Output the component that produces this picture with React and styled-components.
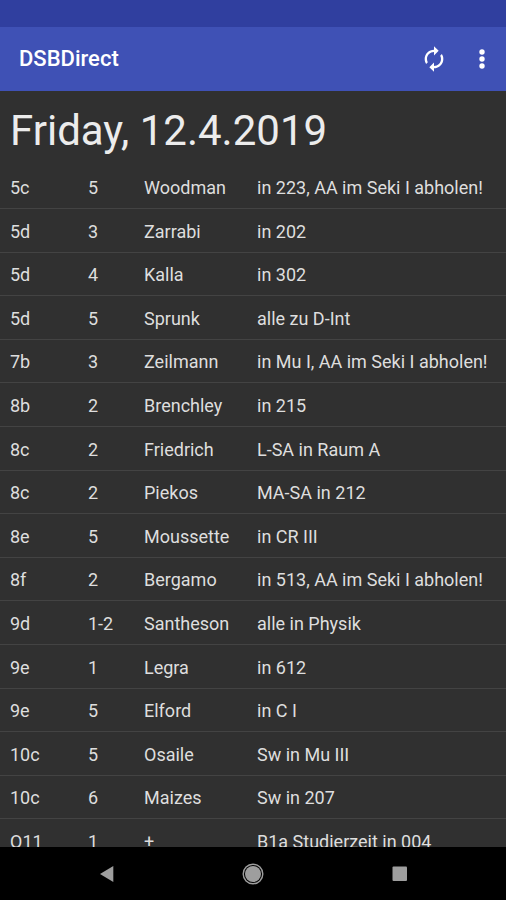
import styled, { createGlobalStyle } from 'styled-components';

const GlobalStyle = createGlobalStyle`
  * {
    box-sizing: border-box;
  }

  body {
    margin: 0;
    background: #303030;
    color: #dedede;
    font-family: Roboto, 'Liberation Sans', sans-serif;
  }
`;

const Screen = styled.div`
  display: flex;
  flex-direction: column;
  height: 100vh;
`;

const StatusBar = styled.div`
  flex: none;
  height: 27px;
  background: #303f9f;
`;

const AppBar = styled.header`
  display: flex;
  flex: none;
  align-items: center;
  height: 64px;
  padding: 0 8px 0 19px;
  background: #3f51b5;
`;

const AppTitle = styled.span`
  flex: 1;
  color: #fff;
  font-size: 22px;
  font-weight: 500;
  line-height: 30px;
`;

const Actions = styled.div`
  display: flex;
  gap: 12px;
`;

const IconButton = styled.button`
  display: flex;
  align-items: center;
  justify-content: center;
  width: ${({ $width }) => $width}px;
  height: 40px;
  padding: 0;
  border: none;
  background: none;
  color: ${({ $color }) => $color || '#fff'};
  cursor: pointer;
`;

const Content = styled.main`
  flex: 1;
  min-height: 0;
  overflow-y: auto;
  scrollbar-width: none;
`;

const DateHeading = styled.h1`
  margin: 0;
  padding: 12px 10px 6px;
  color: #ececec;
  font-size: 42px;
  font-weight: 400;
  line-height: 56px;
`;

const PlanTable = styled.table`
  width: 100%;
  border-collapse: separate;
  border-spacing: 0;
  table-layout: fixed;
`;

const Column = styled.col`
  width: ${({ $width }) => ($width ? `${$width}px` : 'auto')};
`;

const Row = styled.tr`
  height: 44px;

  &:nth-child(5n),
  &:nth-child(5n + 3) {
    height: 43px;
  }
`;

const Cell = styled.td`
  padding: 2px 0 0 10px;
  border-bottom: 1px solid #434343;
  font-size: 18px;
  line-height: 24px;
  white-space: nowrap;
`;

const NavBar = styled.nav`
  display: flex;
  flex: none;
  align-items: center;
  justify-content: space-between;
  height: 53px;
  padding: 0 86px;
  background: #000;
`;

const COLUMNS = [78, 56, 113, null];

const ENTRIES = [
  ['5c', '5', 'Woodman', 'in 223, AA im Seki I abholen!'],
  ['5d', '3', 'Zarrabi', 'in 202'],
  ['5d', '4', 'Kalla', 'in 302'],
  ['5d', '5', 'Sprunk', 'alle zu D-Int'],
  ['7b', '3', 'Zeilmann', 'in Mu I, AA im Seki I abholen!'],
  ['8b', '2', 'Brenchley', 'in 215'],
  ['8c', '2', 'Friedrich', 'L-SA in Raum A'],
  ['8c', '2', 'Piekos', 'MA-SA in 212'],
  ['8e', '5', 'Moussette', 'in CR III'],
  ['8f', '2', 'Bergamo', 'in 513, AA im Seki I abholen!'],
  ['9d', '1-2', 'Santheson', 'alle in Physik'],
  ['9e', '1', 'Legra', 'in 612'],
  ['9e', '5', 'Elford', 'in C I'],
  ['10c', '5', 'Osaile', 'Sw in Mu III'],
  ['10c', '6', 'Maizes', 'Sw in 207'],
  ['Q11', '1', '+', 'B1a Studierzeit in 004'],
];

const RefreshIcon = () => (
  <svg width="28" height="28" viewBox="0 0 24 24" fill="currentColor" aria-hidden="true">
    <path d="M12 6v3l4-4-4-4v3c-4.420 0-8 3.580-8 8 0 1.570.46 3.030 1.240 4.260L6.700 14.800C6.250 13.970 6 13.010 6 12c0-3.310 2.690-6 6-6zm6.760 1.740L17.300 9.200c.44.840.7 1.790.7 2.800 0 3.310-2.690 6-6 6v-3l-4 4 4 4v-3c4.420 0 8-3.580 8-8 0-1.570-.46-3.030-1.240-4.260z" />
  </svg>
);

const MoreIcon = () => (
  <svg width="28" height="28" viewBox="0 0 24 24" fill="currentColor" aria-hidden="true">
    <circle cx="12" cy="6" r="2.300" />
    <circle cx="12" cy="12" r="2.300" />
    <circle cx="12" cy="18" r="2.300" />
  </svg>
);

const BackIcon = () => (
  <svg width="24" height="24" viewBox="0 0 24 24" fill="currentColor" aria-hidden="true">
    <path d="M6 12 19.300 4v16z" />
  </svg>
);

const HomeIcon = () => (
  <svg width="24" height="24" viewBox="0 0 24 24" aria-hidden="true">
    <circle cx="12" cy="12" r="9.800" fill="none" stroke="currentColor" strokeWidth="1.400" />
    <circle cx="12" cy="12" r="8" fill="currentColor" />
  </svg>
);

const RecentsIcon = () => (
  <svg width="24" height="24" viewBox="0 0 24 24" fill="currentColor" aria-hidden="true">
    <rect x="4.500" y="4.500" width="14.500" height="14.500" rx="1" />
  </svg>
);

const App = () => {
  return (
    <>
      <GlobalStyle />
      <Screen>
        <StatusBar />
        <AppBar>
          <AppTitle>DSBDirect</AppTitle>
          <Actions>
            <IconButton $width={40} aria-label="Refresh">
              <RefreshIcon />
            </IconButton>
            <IconButton $width={32} aria-label="More options">
              <MoreIcon />
            </IconButton>
          </Actions>
        </AppBar>
        <Content>
          <DateHeading>Friday, 12.4.2019</DateHeading>
          <PlanTable>
            <colgroup>
              {COLUMNS.map((width, i) => (
                <Column key={i} $width={width} />
              ))}
            </colgroup>
            <tbody>
              {ENTRIES.map((entry, i) => (
                <Row key={i}>
                  {entry.map((text, j) => (
                    <Cell key={j}>{text}</Cell>
                  ))}
                </Row>
              ))}
            </tbody>
          </PlanTable>
        </Content>
        <NavBar>
          <IconButton $width={40} $color="#9e9e9e" aria-label="Back">
            <BackIcon />
          </IconButton>
          <IconButton $width={40} $color="#9e9e9e" aria-label="Home">
            <HomeIcon />
          </IconButton>
          <IconButton $width={40} $color="#9e9e9e" aria-label="Recent apps">
            <RecentsIcon />
          </IconButton>
        </NavBar>
      </Screen>
    </>
  );
};

export default App;
